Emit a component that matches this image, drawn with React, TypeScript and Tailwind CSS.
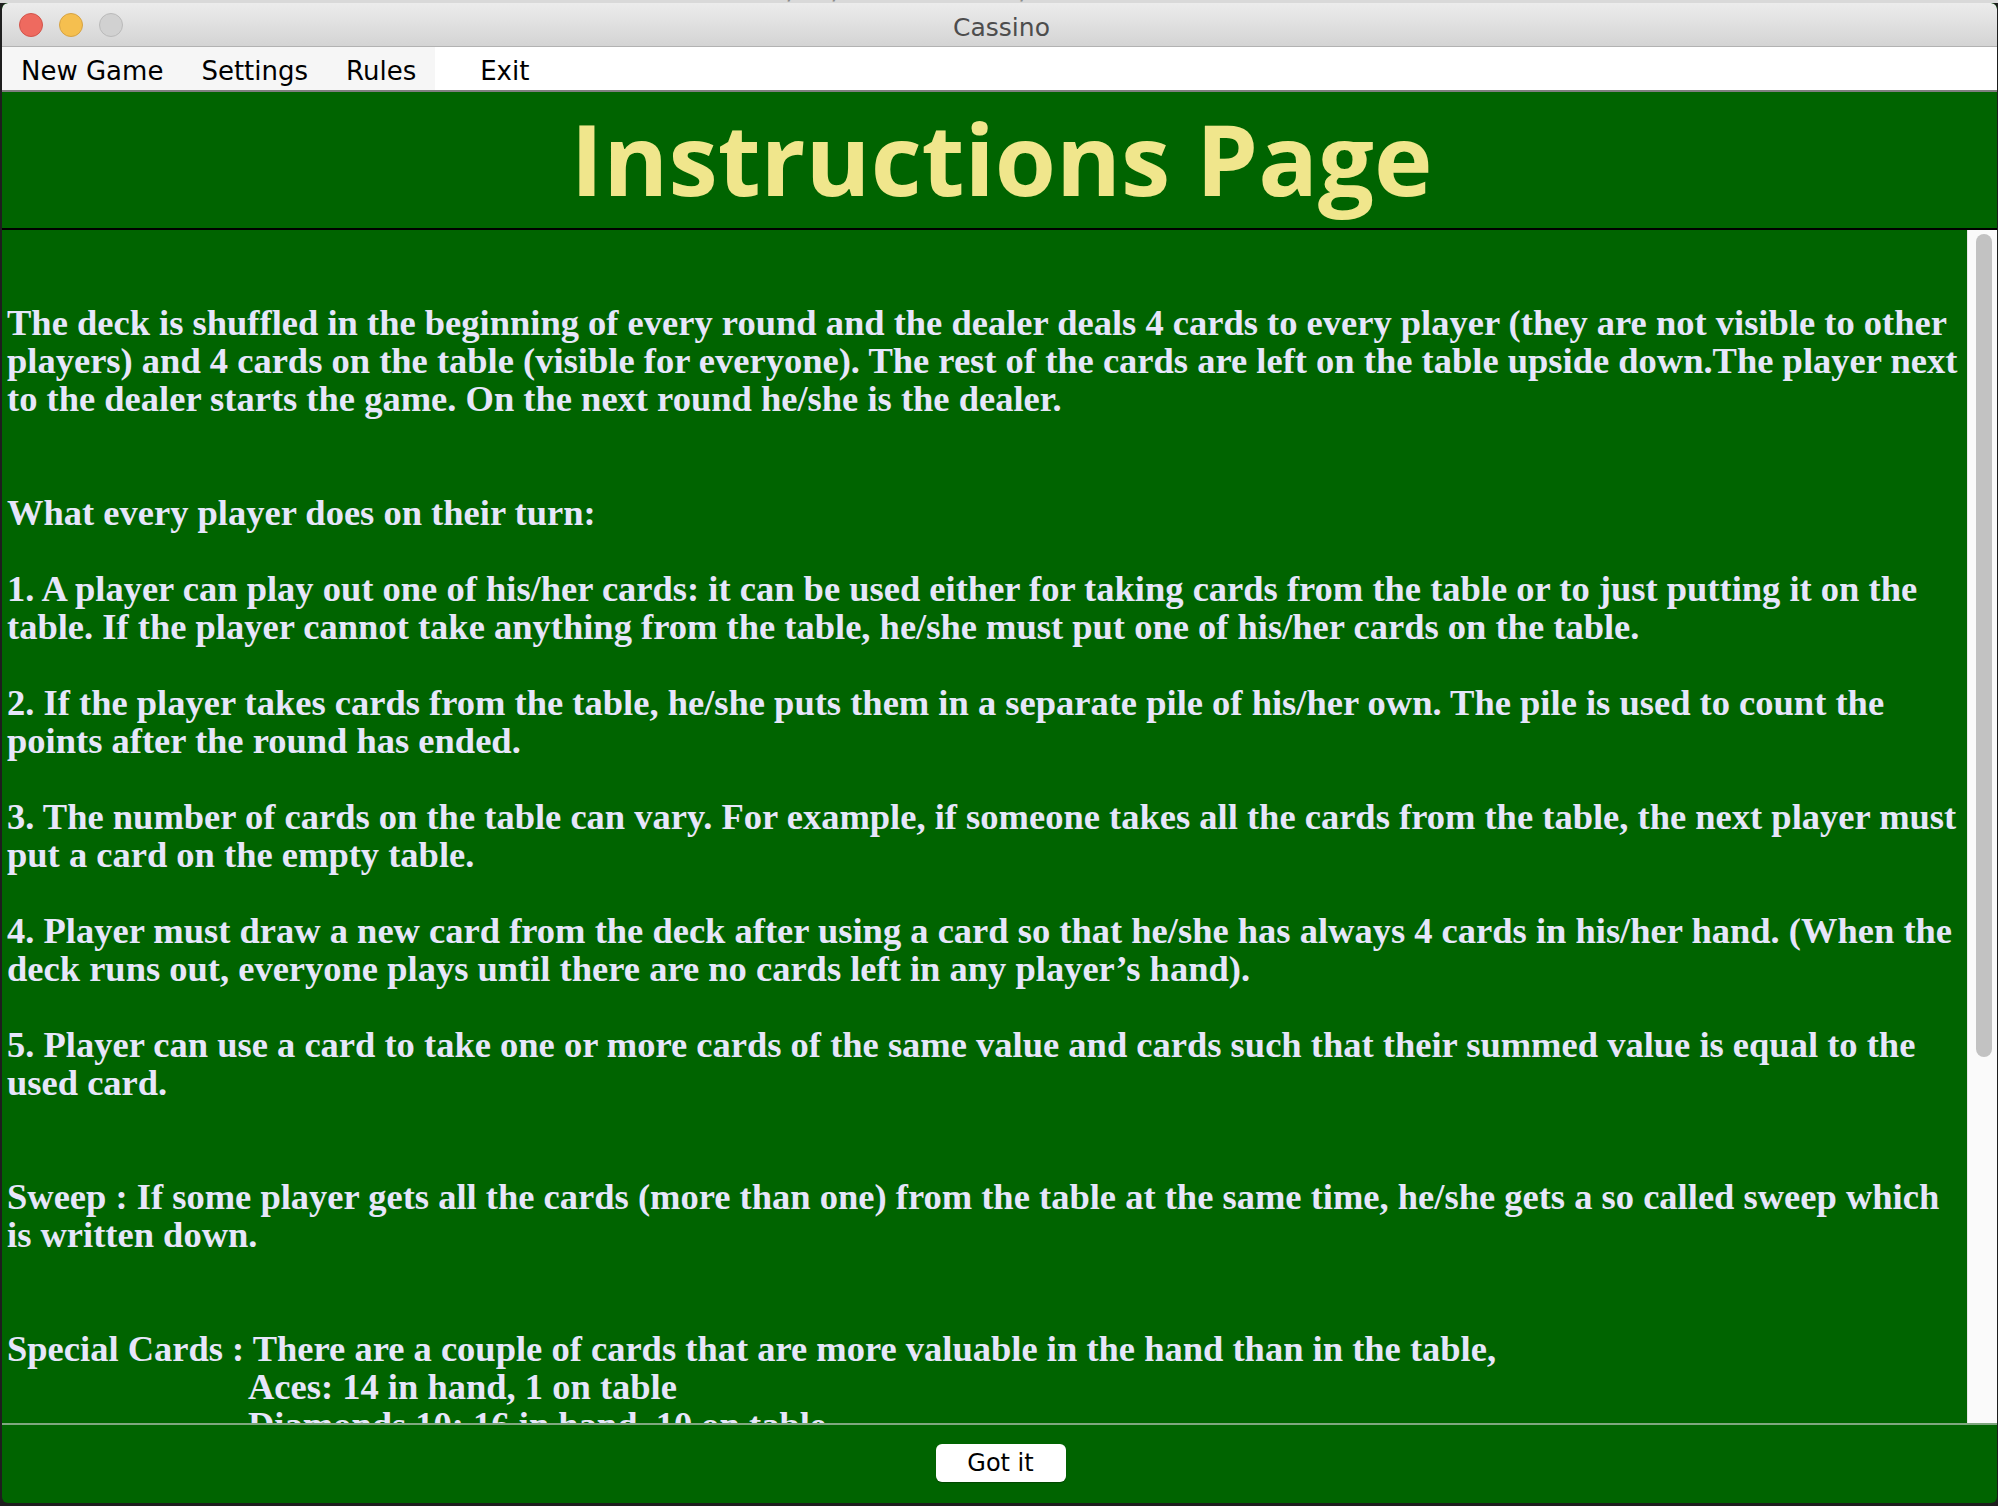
import React from "react";

type Line = { text: string; indent?: boolean };

// each entry is one 38px row of the instructions pane; "" is an empty row
const lines: Line[] = [
  { text: "" },
  { text: "" },
  { text: "The deck is shuffled in the beginning of every round and the dealer deals 4 cards to every player (they are not visible to other" },
  { text: "players) and 4 cards on the table (visible for everyone). The rest of the cards are left on the table upside down.The player next" },
  { text: "to the dealer starts the game. On the next round he/she is the dealer." },
  { text: "" },
  { text: "" },
  { text: "What every player does on their turn:" },
  { text: "" },
  { text: "1. A player can play out one of his/her cards: it can be used either for taking cards from the table or to just putting it on the" },
  { text: "table. If the player cannot take anything from the table, he/she must put one of his/her cards on the table." },
  { text: "" },
  { text: "2. If the player takes cards from the table, he/she puts them in a separate pile of his/her own. The pile is used to count the" },
  { text: "points after the round has ended." },
  { text: "" },
  { text: "3. The number of cards on the table can vary. For example, if someone takes all the cards from the table, the next player must" },
  { text: "put a card on the empty table." },
  { text: "" },
  { text: "4. Player must draw a new card from the deck after using a card so that he/she has always 4 cards in his/her hand. (When the" },
  { text: "deck runs out, everyone plays until there are no cards left in any player\u2019s hand)." },
  { text: "" },
  { text: "5. Player can use a card to take one or more cards of the same value and cards such that their summed value is equal to the" },
  { text: "used card." },
  { text: "" },
  { text: "" },
  { text: "Sweep : If some player gets all the cards (more than one) from the table at the same time, he/she gets a so called sweep which" },
  { text: "is written down." },
  { text: "" },
  { text: "" },
  { text: "Special Cards : There are a couple of cards that are more valuable in the hand than in the table," },
  { text: "Aces: 14 in hand, 1 on table", indent: true },
  { text: "Diamonds 10: 16 in hand, 10 on table", indent: true },
];

const menuItems = ["New Game", "Settings", "Rules"];

function TitleBar() {
  return (
    <div className="relative h-[44px] flex items-center bg-gradient-to-b from-[#ececec] to-[#d4d4d4] border-b border-[#b2b2b2] rounded-t-[6px]">
      <div className="flex items-center gap-[16px] pl-[17px]">
        <span className="w-[24px] h-[24px] rounded-full bg-[#ee6a5f] border border-[#d2544b]" />
        <span className="w-[24px] h-[24px] rounded-full bg-[#f5bf4f] border border-[#d6a344]" />
        <span className="w-[24px] h-[24px] rounded-full bg-[#d1d1d1] border border-[#bababa]" />
      </div>
      <div className="absolute inset-0 flex items-center justify-center pt-[5px] pl-[4px]">
        <span className="text-[25px] leading-none text-[#4d4d4d] [font-family:'DejaVu_Sans',sans-serif]">Cassino</span>
      </div>
    </div>
  );
}

function MenuBar() {
  return (
    <div className="h-[45px] flex bg-white border-b-2 border-[#7f7f7f] [font-family:'DejaVu_Sans',sans-serif] text-[26px] text-black">
      <div className="flex h-full bg-[#f6f6f6]">
        {menuItems.map((item) => (
          <div key={item} className="px-[19px] pt-[5px] leading-[38px]">
            {item}
          </div>
        ))}
      </div>
      <div className="ml-[26px] px-[19px] pt-[5px] leading-[38px]">Exit</div>
    </div>
  );
}

function Scrollbar() {
  return (
    <div className="w-[30px] h-full bg-[#fafafa] border-l border-[#e6e6e6] pl-[8px] pt-[4px]">
      <div className="w-[16px] h-[823px] rounded-full bg-[#c2c2c2]" />
    </div>
  );
}

export default function App() {
  return (
    <div className="w-[1998px] h-[1506px] bg-[#1e1e1e] overflow-hidden flex flex-col">
      <div className="h-[3px] bg-[#d9d9d9] overflow-hidden">
        <div className="pl-[533px] -mt-[22px] text-[25px] leading-[26px] text-[#8c8c8c] whitespace-nowrap [font-family:'DejaVu_Sans',sans-serif]">
          Worksheet - Cassino/src/Cassino Game/GameGUI.scala - ScalaIDE
        </div>
      </div>

      <div className="ml-[2px] mr-px h-[1500px] rounded-[6px] overflow-hidden flex flex-col bg-[#006400]">
        <TitleBar />
        <MenuBar />

        <div className="h-[138px] flex items-center justify-center border-b-2 border-black pb-[5px] pl-[4px]">
          <h1 className="text-[99px] leading-none font-bold text-[#f0e68c] [font-family:'Open_Sans',sans-serif]">
            Instructions Page
          </h1>
        </div>

        <div className="h-[1193px] flex">
          <div className="flex-1 overflow-hidden pl-[5px] text-[#e6e6fa] font-bold text-[36.5px] [font-family:'Liberation_Serif',serif]">
            <div className="-mt-[2px]">
              {lines.map((line, i) => (
                <div
                  key={i}
                  className={`h-[38px] leading-[38px] whitespace-nowrap ${line.indent ? "pl-[241px]" : ""}`}
                >
                  {line.text}
                </div>
              ))}
            </div>
          </div>
          <Scrollbar />
        </div>

        <div className="h-[2px] bg-[#7fa77f]" />

        <div className="h-[78px] flex justify-center pt-[19px] pl-[2px]">
          <button className="w-[130px] h-[38px] bg-white rounded-[6px] shadow-[0_1px_1px_rgba(0,0,0,0.3)] text-[24px] text-black leading-none [font-family:'DejaVu_Sans',sans-serif]">
            Got it
          </button>
        </div>
      </div>
    </div>
  );
}
